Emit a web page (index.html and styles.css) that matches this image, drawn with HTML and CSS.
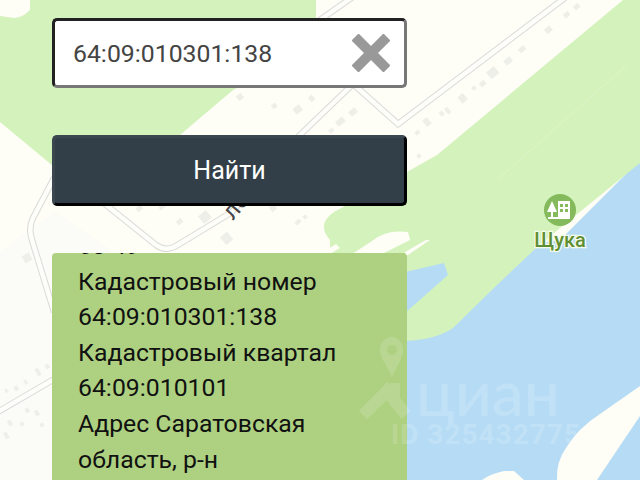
FILE: index.html
```html
<!DOCTYPE html>
<html lang="ru">
<head>
    <meta charset="UTF-8">
    <title>Кадастровый номер</title>
    <link rel="stylesheet" href="styles.css">
</head>
<body>
<div class="page">
    <svg class="map" width="640" height="480" viewBox="0 0 640 480">
        <rect class="land" width="640" height="480"/>
        <polygon class="land-gray" points="0,252 55,212 110,250 60,480 0,480"/>
        <path class="water" d="M640 160 L640 480 L400 480 L400 262 L560 240 Z"/>
        <path class="park" d="M30 0 L316 0 L316 48 L233 90 L180 135 L100 205 L0 122 L0 16 L14 18 Q22 18 30 10 Z"/>
        <path class="park" d="M623 0 L640 0 L640 163 L560 228 L534 250 L497 285 L453 328 Q435 340 405 341 L330 341 L330 240 Q316 224 334 212 L407 172 L437 155 Z"/>
        <path class="water" d="M405 272 L444 263 L448 275 L405 313 Z"/>
        <path class="land" d="M557 480 Q556 462 566 448 Q578 428 600 414 L640 386 L640 416 L597 480 Z"/>
        <path class="land" d="M482 480 Q490 474 504 471 L514 471 L524 480 Z"/>
        <path class="land" d="M372 241 Q386 229 408 232 L410 240 L382 254 L352 254 Z"/>
        <path class="land" d="M405 252 L426 240 L430 240 L405 257 Z"/>
        <path class="land" d="M320 254 L336 244 L340 248 L330 254 Z"/>
        <line class="park-line" x1="497" y1="180" x2="627" y2="65"/>

        <g class="blocks">
            <rect x="545" y="27" width="7" height="6" transform="rotate(-40 548 30)"/>
            <rect x="564" y="12" width="6" height="5" transform="rotate(-40 567 15)"/>
            <rect x="574" y="4" width="6" height="5" transform="rotate(-40 577 7)"/>
            <rect x="519" y="47" width="7" height="5" transform="rotate(-40 522 50)"/>
            <rect x="504" y="58" width="8" height="6" transform="rotate(-40 508 61)"/>
            <rect x="488" y="68" width="10" height="9" transform="rotate(-40 493 73)"/>
            <rect x="480" y="81" width="6" height="5" transform="rotate(-40 483 84)"/>
            <rect x="472" y="86" width="4" height="4" transform="rotate(-40 474 88)"/>
            <rect x="459" y="94" width="7" height="8" transform="rotate(-40 463 98)"/>
            <rect x="446" y="107" width="4" height="7" transform="rotate(-40 448 111)"/>
            <rect x="440" y="111" width="4" height="5" transform="rotate(-40 442 114)"/>
            <rect x="424" y="118" width="6" height="8" transform="rotate(-40 427 122)"/>
            <rect x="415" y="131" width="5" height="4" transform="rotate(-40 417 133)"/>
            <rect x="417" y="154" width="4" height="4" transform="rotate(-40 419 156)"/>
            <rect x="349" y="109" width="8" height="6" transform="rotate(-40 353 112)"/>
            <rect x="336" y="119" width="9" height="6" transform="rotate(-40 340 122)"/>
            <rect x="329" y="129" width="5" height="4" transform="rotate(-40 331 131)"/>
            <rect x="237" y="94" width="6" height="6" transform="rotate(-40 240 97)"/>
            <rect x="272" y="103" width="5" height="5" transform="rotate(-40 275 106)"/>
            <rect x="294" y="106" width="8" height="7" transform="rotate(-40 298 110)"/>
            <rect x="309" y="95" width="5" height="6" transform="rotate(-40 312 98)"/>
            <rect x="136" y="206" width="6" height="5" transform="rotate(-40 139 208)"/>
            <rect x="159" y="205" width="6" height="4" transform="rotate(-40 162 207)"/>
            <rect x="177" y="219" width="6" height="5" transform="rotate(-40 180 222)"/>
            <rect x="200" y="212" width="10" height="10" transform="rotate(-40 205 217)"/>
            <rect x="222" y="233" width="9" height="10" transform="rotate(-40 227 238)"/>
            <rect x="270" y="205" width="6" height="6" transform="rotate(-40 273 208)"/>
            <rect x="295" y="220" width="6" height="4" transform="rotate(-40 298 222)"/>
            <rect x="303" y="215" width="4" height="4" transform="rotate(-40 305 217)"/>
            <rect x="23" y="254" width="8" height="8" transform="rotate(-30 27 258)"/>
            <rect x="5" y="389" width="3" height="4" transform="rotate(-30 6 391)"/>
            <rect x="14" y="386" width="4" height="5" transform="rotate(-30 16 388)"/>
            <rect x="24" y="380" width="3" height="5" transform="rotate(-30 25 382)"/>
            <rect x="36" y="368" width="4" height="8" transform="rotate(-30 38 372)"/>
            <rect x="45" y="364" width="4" height="5" transform="rotate(-30 47 366)"/>
            <rect x="25" y="408" width="4" height="5" transform="rotate(-30 27 410)"/>
            <rect x="35" y="410" width="4" height="6" transform="rotate(-30 37 413)"/>
            <rect x="8" y="420" width="4" height="6" transform="rotate(-30 10 423)"/>
            <rect x="20" y="422" width="4" height="4" transform="rotate(-30 22 424)"/>
            <rect x="4" y="432" width="4" height="7" transform="rotate(-30 6 435)"/>
            <rect x="40" y="423" width="4" height="4" transform="rotate(-30 42 425)"/>
        </g>

        <g class="road">
            <path d="M342 74 L398 124 L566 -3"/>
            <path d="M354 -4 L300 34"/>
            <path d="M352 85 L300 135 L232 212 L176 246 Q166 252 156 245 L100 200"/>
            <path d="M54 178 L33 218 Q28 228 32 240 L54 312"/>
            <path d="M-4 413 L56 378"/>
        </g>
        <g class="road road-in">
            <path d="M342 74 L398 124 L566 -3"/>
            <path d="M354 -4 L300 34"/>
            <path d="M352 85 L300 135 L232 212 L176 246 Q166 252 156 245 L100 200"/>
            <path d="M54 178 L33 218 Q28 228 32 240 L54 312"/>
            <path d="M-4 413 L56 378"/>
        </g>

        <text class="street" transform="translate(233 221) rotate(-50)">ле</text>

        <circle class="poi" cx="560" cy="210" r="16"/>
        <g class="poi-icon">
            <path d="M552 201 L557 212 L547 212 Z"/>
            <rect x="551" y="212" width="2" height="5"/>
            <rect x="548" y="217" width="22" height="2"/>
            <path fill-rule="evenodd" d="M558 201 H570 V217 H558 Z M560 204 V207 H563 V204 Z M565 204 V207 H568 V204 Z M560 209 V212 H563 V209 Z M565 209 V212 H568 V209 Z"/>
        </g>
        <text class="poi-label" x="560" y="247">Щука</text>
    </svg>

    <div class="search">
        <div class="search-box">
            <span class="search-value">64:09:010301:138</span>
            <svg class="clear" width="38" height="38" viewBox="0 0 38 38">
                <path d="M3 3 L35 35 M35 3 L3 35"/>
            </svg>
        </div>
        <button class="search-btn">Найти</button>
        <div class="result">
            <div class="result-text">
                63 49<br>
                Кадастровый номер<br>
                64:09:010301:138<br>
                Кадастровый квартал<br>
                64:09:010101<br>
                Адрес Саратовская<br>
                область, р-н
            </div>
        </div>
    </div>

    <svg class="watermark" width="640" height="480" viewBox="0 0 640 480">
        <path fill-rule="evenodd" d="M392 337 C385 337 380 343 380 350 C380 358 388 367 392 377 C396 367 403 358 403 350 C403 343 398 337 392 337 Z M392 345 A5 5 0 1 0 392.01 355 A5 5 0 1 0 392 345 Z"/>
        <path class="wm-roof" d="M363 415 L387 391 L406 415"/>
        <rect x="390" y="383" width="10" height="15"/>
        <text class="wm-name" x="416" y="416">циан</text>
        <text class="wm-id" x="391" y="444">ID 325432775</text>
    </svg>
</div>
</body>
</html>
```

FILE: styles.css
```css
html, body {
    margin: 0;
    padding: 0;
}

body {
    font-family: Roboto, "Liberation Sans", sans-serif;
}

.page {
    position: relative;
    width: 640px;
    height: 480px;
    overflow: hidden;
}

.map, .watermark {
    position: absolute;
    top: 0;
    left: 0;
}

.watermark {
    fill: #fff;
    opacity: 0.14;
}

.land { fill: #fefdf6; }
.land-gray { fill: #fbfbf7; }
.park { fill: #d4f2bc; }
.water { fill: #b6dcf5; }

.park-line {
    stroke: #dcf5c9;
    stroke-width: 1;
}

.blocks { fill: #efefea; }

.road {
    fill: none;
    stroke: #dadad8;
    stroke-width: 6.5;
}

.road-in {
    stroke: #fdfdfa;
    stroke-width: 4.5;
}

.street {
    font-size: 24px;
    fill: #444;
}

.poi { fill: #84b95c; }
.poi-icon { fill: #fff; }

.poi-label {
    font-size: 20px;
    font-weight: 500;
    text-anchor: middle;
    fill: #5f8f35;
    stroke: #f4fbe9;
    stroke-width: 2.5px;
    paint-order: stroke;
}

.wm-roof {
    fill: none;
    stroke: #fff;
    stroke-width: 12;
}

.wm-name {
    font-family: Lato, Roboto, sans-serif;
    font-size: 64px;
    font-weight: 500;
}

.wm-id {
    font-size: 28px;
    font-weight: 700;
    letter-spacing: 1px;
}

.search {
    position: relative;
    display: flex;
    flex-direction: column;
    width: 355px;
    margin-left: 52px;
    padding-top: 18px;
}

.search-box {
    display: flex;
    align-items: center;
    justify-content: space-between;
    box-sizing: border-box;
    height: 70px;
    padding: 0 14px 0 18px;
    background: #fff;
    border: 3px solid;
    border-color: #222 #777 #777 #222;
    border-radius: 5px;
}

.search-value {
    font-size: 24.8px;
    color: #444;
}

.clear path {
    fill: none;
    stroke: #999;
    stroke-width: 10;
}

.search-btn {
    box-sizing: border-box;
    height: 71px;
    margin-top: 47px;
    padding: 0;
    font-family: inherit;
    font-size: 25px;
    color: #fff;
    background: #333f48;
    border: 3px solid;
    border-color: #3b464f #000 #000 #3b464f;
    border-radius: 5px;
}

.result {
    height: 227px;
    margin-top: 47px;
    overflow: hidden;
    background: #aed181;
    border-radius: 4px 4px 0 0;
}

.result-text {
    margin-top: -25px;
    padding-left: 26px;
    font-size: 24.8px;
    line-height: 35.6px;
    color: #111;
}
```
